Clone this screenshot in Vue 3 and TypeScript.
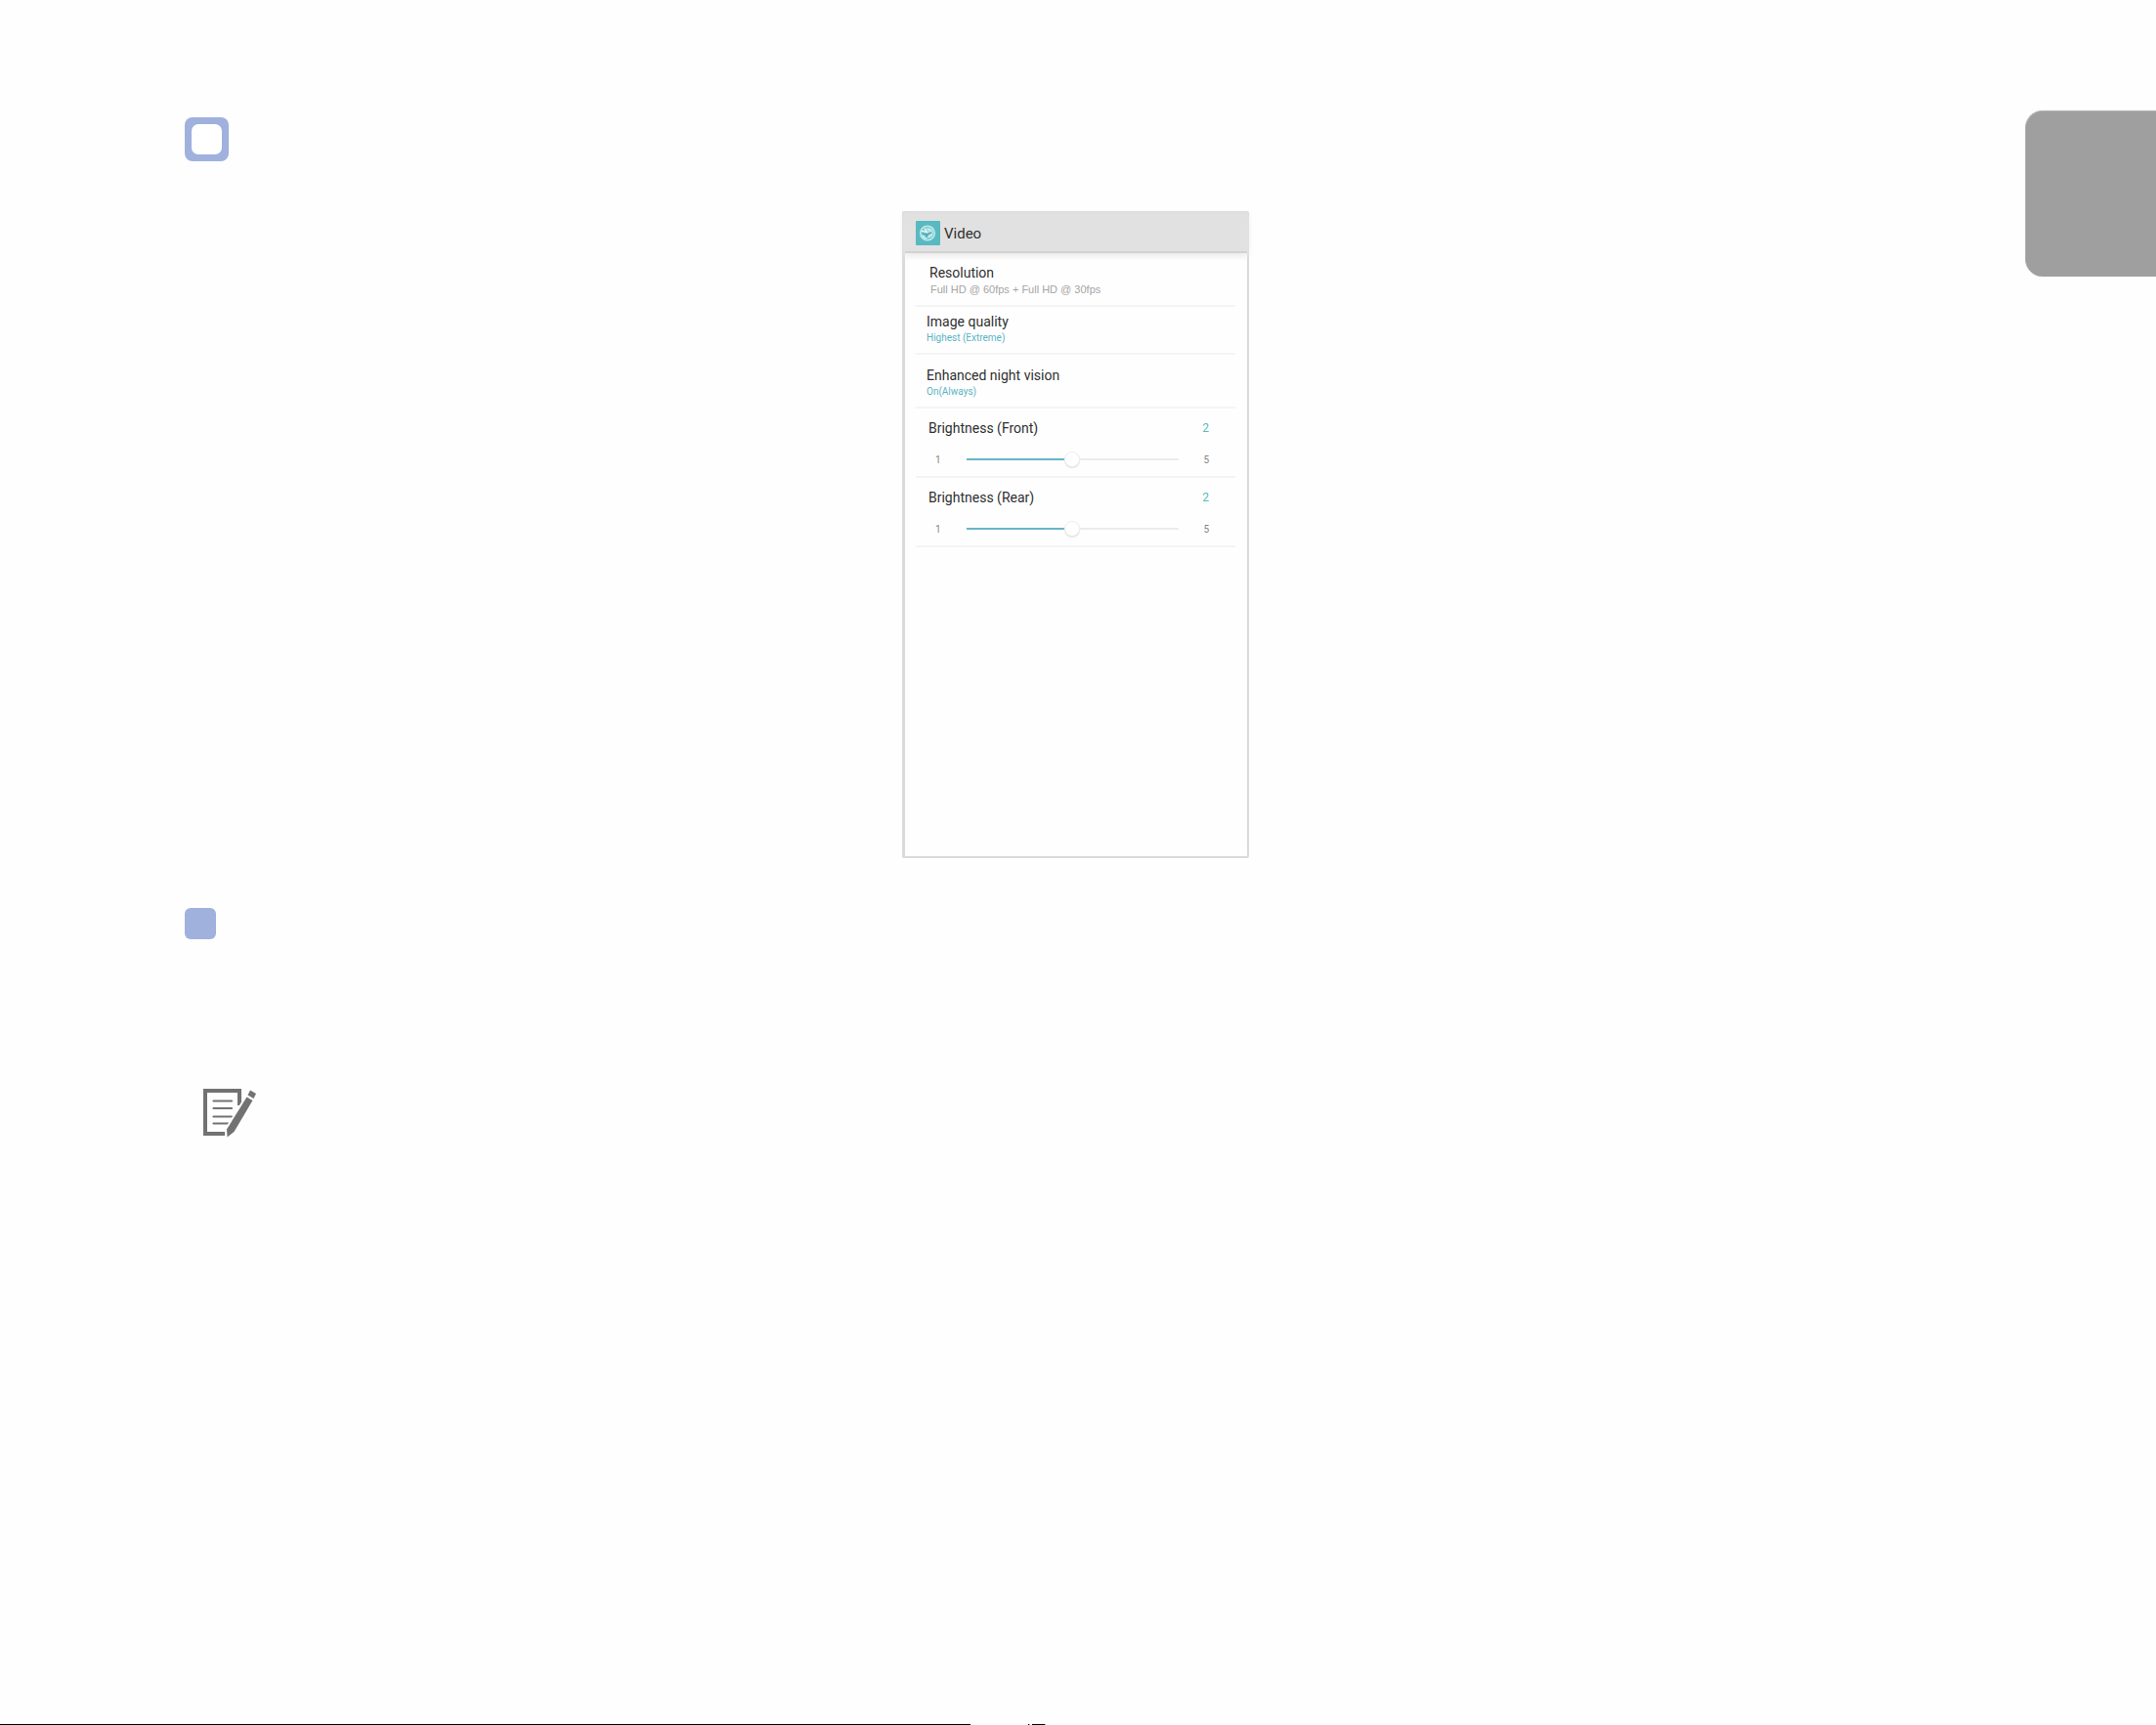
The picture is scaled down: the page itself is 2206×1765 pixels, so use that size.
<script setup lang="ts">
import { ref } from 'vue'

interface Choice {
  title: string
  value: string
  kind: string
}

interface Level {
  id: string
  title: string
  shown: number
  position: number
}

const choices: Choice[] = [
  { title: 'Resolution', value: 'Full HD @ 60fps + Full HD @ 30fps', kind: 'resolution' },
  { title: 'Image quality', value: 'Highest (Extreme)', kind: 'quality' },
  { title: 'Enhanced night vision', value: 'On(Always)', kind: 'night' },
]

const levels = ref<Level[]>([
  { id: 'front', title: 'Brightness (Front)', shown: 2, position: 3 },
  { id: 'rear', title: 'Brightness (Rear)', shown: 2, position: 3 },
])
</script>

<template>
  <div class="page">
    <div class="body">
      <main class="content">
        <div class="badge"><div class="badge-hole"></div></div>

        <section class="panel">
          <header class="panel-head">
            <svg class="app-icon" viewBox="0 0 26 26" aria-hidden="true">
              <rect width="26" height="26" rx="1" fill="#58b9c1" />
              <circle cx="12.500" cy="13" r="7.700" fill="#7ccdd2" stroke="#c9ecec" stroke-width="1.300" />
              <path d="M11 8c5-1.500 8 1.500 7.500 5.500s-4 5-7 4l3.500-4z" fill="#bce6e7" />
              <path d="M5.500 10.500 12 12l-2.500-4" fill="none" stroke="#e4f6f5" stroke-width="1.500" />
              <path d="M7 13.500 12.500 14.500 17 12M12.500 14.500 11 18" fill="none" stroke="#3faab5" stroke-width="1.500" />
              <path d="M7 15c1 2.500 3 3.500 5 3.500" fill="none" stroke="#e4f6f5" stroke-width="1.200" />
            </svg>
            <h1>Video</h1>
          </header>
          <div class="rows">
            <div v-for="c in choices" :key="c.kind" class="row" :class="c.kind">
              <h2>{{ c.title }}</h2>
              <p>{{ c.value }}</p>
            </div>
            <div v-for="l in levels" :key="l.id" class="row level">
              <div class="level-top">
                <label :for="l.id">{{ l.title }}</label>
                <output :for="l.id">{{ l.shown }}</output>
              </div>
              <div class="level-bar">
                <span>1</span>
                <input :id="l.id" v-model.number="l.position" type="range" min="1" max="5" />
                <span>5</span>
              </div>
            </div>
          </div>
        </section>

        <div class="marker"></div>

        <svg class="note" viewBox="0 0 56 52" aria-hidden="true">
          <path d="M22 46H2V2h35v15" fill="none" stroke="#727272" stroke-width="4" />
          <path d="M10.500 12.500H29M10.500 20H29M10.500 28.500H29M10.500 35.500H27" fill="none" stroke="#727272" stroke-width="2.200" stroke-linecap="round" />
          <path d="M44.500 8.500 50.500 12 31.500 44 24.500 49.500 24 41.500z" fill="#727272" stroke="#fff" stroke-width="4" paint-order="stroke" stroke-linejoin="round" />
          <path d="M48 1.500 54 5 51.500 10 45.500 6.500z" fill="#727272" />
        </svg>
      </main>
      <aside class="tab"></aside>
    </div>
    <footer class="edge">
      <i class="edge-long"></i>
      <i class="edge-dot"></i>
      <i class="edge-dash"></i>
    </footer>
  </div>
</template>

<style>
body {
  margin: 0;
  background: #fefefe;
}
</style>

<style scoped>
.page {
  display: flex;
  flex-direction: column;
  min-height: 100vh;
  font-family: Roboto, 'Liberation Sans', sans-serif;
  color: #303030;
}
.body {
  display: flex;
  align-items: flex-start;
}
.content {
  flex: 1;
  display: flex;
  flex-direction: column;
  align-items: flex-start;
  padding: 120px 60px 0 189px;
}
.badge {
  box-sizing: border-box;
  width: 45px;
  height: 45px;
  padding: 7px;
  border-radius: 8px;
  background: #9fb1dc;
}
.badge-hole {
  height: 31px;
  border-radius: 7px;
  background: #fff;
}
.panel {
  box-sizing: border-box;
  align-self: center;
  width: 355px;
  min-height: 662px;
  margin-top: 51px;
  border: 2px solid #dadada;
  border-left-width: 3px;
  border-radius: 2px;
}
.panel-head {
  display: flex;
  align-items: center;
  gap: 4px;
  box-sizing: border-box;
  height: 41px;
  padding: 1px 0 0 11px;
  background: #e1e1e1;
  border-bottom: 2px solid #d2d2d2;
  box-shadow: 0 2px 6px 1px #e8e8e8;
}
.app-icon {
  width: 25px;
  height: 25px;
}
h1,
h2,
p {
  margin: 0;
  font-weight: 400;
}
h1 {
  font-size: 15px;
  line-height: 20px;
  padding-top: 1px;
}
.rows {
  padding: 0 12px 0 11px;
}
.row {
  box-sizing: border-box;
  border-bottom: 2px solid #f4f4f4;
}
h2,
label {
  font-size: 14px;
  line-height: 18px;
}
p {
  font-size: 10px;
  line-height: 14px;
  color: #5bb3c3;
}
.resolution {
  height: 55px;
  padding: 11px 0 0 14px;
}
.resolution p {
  padding-left: 1px;
  font-family: 'Liberation Sans', sans-serif;
  font-size: 11px;
  line-height: 16px;
  color: #a5a5a5;
}
.quality {
  height: 49px;
  padding: 6px 0 0 11px;
}
.night {
  height: 55px;
  padding: 12px 0 0 11px;
}
.quality p,
.night p {
  padding-top: 1px;
}
.level {
  height: 71px;
  padding: 11px 27px 0 13px;
}
.level-top,
.level-bar {
  display: flex;
  align-items: center;
  justify-content: space-between;
}
output {
  font-size: 12px;
  color: #54bdb9;
}
.level-bar {
  height: 16px;
  margin-top: 15px;
  padding-left: 7px;
  font-size: 10px;
  color: #858585;
}
input {
  appearance: none;
  width: 217px;
  height: 16px;
  margin: 0;
  background: linear-gradient(to right, #69b5c9 50%, #ececec 50%) center / 100% 2px no-repeat;
}
input::-webkit-slider-thumb {
  appearance: none;
  width: 16px;
  height: 16px;
  border: 1px solid #eee;
  border-radius: 50%;
  background: #fff;
  box-shadow: 0 1px 1px #e2e2e2;
}
.marker {
  width: 32px;
  height: 32px;
  margin-top: 51px;
  border-radius: 6px;
  background: #9fb1dc;
}
.note {
  width: 56px;
  height: 52px;
  margin: 153px 0 0 19px;
}
.tab {
  box-sizing: border-box;
  width: 134px;
  height: 170px;
  margin-top: 113px;
  border-top: 1px solid #b4b4b4;
  border-left: 1px solid #b4b4b4;
  border-radius: 18px 0 0 18px;
  background: #9f9f9f;
}
.edge {
  display: flex;
  height: 1px;
  margin-top: auto;
}
.edge i {
  background: #000;
}
.edge-long {
  width: 45%;
}
.edge-dot {
  width: 1px;
  margin-left: 59px;
  border-right: 1px solid #4fd6c4;
}
.edge-dash {
  width: 13px;
  margin-left: 2px;
  border-right: 1px solid #4fd6c4;
}
</style>
